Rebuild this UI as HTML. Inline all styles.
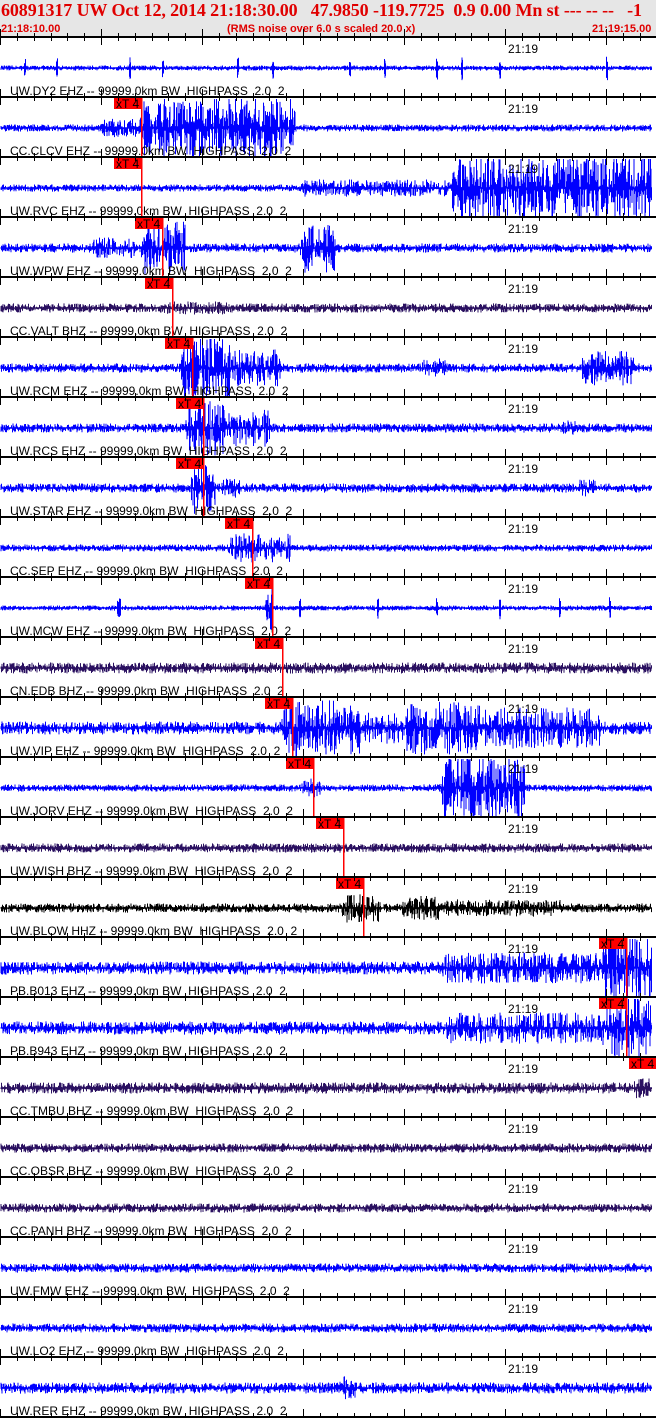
<!DOCTYPE html>
<html><head><meta charset="utf-8">
<style>
html,body{margin:0;padding:0;background:#fff;}
body{width:656px;height:1418px;overflow:hidden;position:relative;}
#hdr{position:absolute;left:0;top:0;width:656px;height:37px;background:#e6e6e6;}
#t1{position:absolute;left:1px;top:0px;font:bold 18px "Liberation Serif",serif;color:#e00000;white-space:nowrap;letter-spacing:-0.1px;}
.t2{position:absolute;top:23px;font:bold 11px "Liberation Sans",sans-serif;color:#e00000;white-space:nowrap;}
svg{position:absolute;left:0;top:0;}
</style></head><body>
<div id="hdr"></div>
<div id="t1">60891317 UW Oct 12, 2014 21:18:30.00&nbsp;&nbsp; 47.9850 -119.7725&nbsp; 0.9 0.00 Mn st --- -- --&nbsp;&nbsp; -1</div>
<div class="t2" style="left:1px">21:18:10.00</div>
<div class="t2" style="left:227px">(RMS noise over 6.0 s scaled 20.0 x)</div>
<div class="t2" style="left:592px">21:19:15.00</div>
<svg id="s" width="656" height="1418" xmlns="http://www.w3.org/2000/svg"></svg>
<script>
(function(){
var B="#0000ff",P="#2a1060",K="#000000";
var T=[
["UW.DY2 EHZ -- 99999.0km BW  HIGHPASS  2.0  2",B,2,[],[25,57,130,163,238,273,350,385,437,462,500,607],null],
["CC.CLCV EHZ -- 99999.0km BW  HIGHPASS  2.0  2",B,3,[[100,200,9],[140,170,30],[170,295,30]],[],114],
["UW.RVC EHZ -- 99999.0km BW  HIGHPASS  2.0  2",B,3,[[300,450,8],[450,655,32]],[],114],
["UW.WPW EHZ -- 99999.0km BW  HIGHPASS  2.0  2",B,4,[[90,135,10],[140,185,26],[300,335,24]],[],135],
["CC.VALT BHZ -- 99999.0km BW  HIGHPASS  2.0  2",P,4,[[160,230,6]],[],145],
["UW.RCM EHZ -- 99999.0km BW  HIGHPASS  2.0  2",B,4,[[180,230,32],[230,280,18],[420,445,9],[580,635,17]],[],165],
["UW.RCS EHZ -- 99999.0km BW  HIGHPASS  2.0  2",B,4,[[185,225,28],[225,270,18],[560,575,7]],[],176],
["UW.STAR EHZ -- 99999.0km BW  HIGHPASS  2.0  2",B,4,[[190,215,28],[215,240,9],[575,595,8]],[],176],
["CC.SEP EHZ -- 99999.0km BW  HIGHPASS  2.0  2",B,3,[[228,290,14]],[],225],
["UW.MCW EHZ -- 99999.0km BW  HIGHPASS  2.0  2",B,2,[[265,272,22]],[120,118,300,378,437,500,560,610],245],
["CN.EDB BHZ -- 99999.0km BW  HIGHPASS  2.0  2",P,5,[],[],255],
["UW.VIP EHZ -- 99999.0km BW  HIGHPASS  2.0  2",B,6,[[280,360,28],[360,400,15],[400,480,26],[480,600,20]],[],265],
["UW.JORV EHZ -- 99999.0km BW  HIGHPASS  2.0  2",B,3,[[300,320,9],[440,525,32]],[],286],
["UW.WISH BHZ -- 99999.0km BW  HIGHPASS  2.0  2",P,4,[],[],316],
["UW.BLOW HHZ -- 99999.0km BW  HIGHPASS  2.0  2",K,4,[[340,380,14],[400,440,12],[440,560,8]],[],336],
["PB.B013 EHZ -- 99999.0km BW  HIGHPASS  2.0  2",B,6,[[440,600,15],[600,656,32]],[],599],
["PB.B943 EHZ -- 99999.0km BW  HIGHPASS  2.0  2",B,6,[[440,600,15],[600,656,32]],[],599],
["CC.TMBU BHZ -- 99999.0km BW  HIGHPASS  2.0  2",P,5,[[630,650,10]],[],629],
["CC.OBSR BHZ -- 99999.0km BW  HIGHPASS  2.0  2",P,4,[],[],null],
["CC.PANH BHZ -- 99999.0km BW  HIGHPASS  2.0  2",P,4,[],[],null],
["UW.FMW EHZ -- 99999.0km BW  HIGHPASS  2.0  2",B,4,[],[],null],
["UW.LO2 EHZ -- 99999.0km BW  HIGHPASS  2.0  2",B,4,[],[],null],
["UW.RER EHZ -- 99999.0km BW  HIGHPASS  2.0  2",B,5,[[338,356,11]],[],null]
];
var seed=12345;function R(){seed=(seed*16807)%2147483647;return seed/2147483647;}
var o="";
for(var i=0;i<T.length;i++){
 var t=T[i],tp=38+60*i,mid=tp+30,d="";
 for(var x=1;x<652;x+=0.5){
  var a=t[2];
  for(var j=0;j<t[3].length;j++){var b=t[3][j];if(x>=b[0]&&x<=b[1]){var f=Math.min(1,(x-b[0])/6+0.2);a=Math.max(a,b[2]*f);}}
  var sp=0;for(var j=0;j<t[4].length;j++){if(Math.abs(x-t[4][j])<1)sp=7;}
  var u1=Math.pow(R(),2.5),u2=Math.pow(R(),2.5);
  var y1=mid-a*u1-(sp?sp*R()+3:0)-0.6,y2=mid+a*u2+(sp?sp*R()+3:0)+0.6;
  y1=Math.max(tp+1,y1);y2=Math.min(tp+59,y2);
  d+="M"+x.toFixed(1)+" "+y1.toFixed(1)+"V"+y2.toFixed(1);
 }
 o+='<path d="'+d+'" stroke="'+t[1]+'" stroke-width="1" fill="none"/>';
 o+='<text x="10" y="'+(tp+57)+'" font-family="Liberation Sans,sans-serif" font-size="12" fill="#000" xml:space="preserve">'+t[0]+'</text>';
 o+='<text x="508" y="'+(tp+15)+'" font-family="Liberation Sans,sans-serif" font-size="12" fill="#000">21:19</text>';
 if(t[5]!==null){var bx=t[5];
  o+='<rect x="'+bx+'" y="'+tp+'" width="27" height="11" fill="#ff0000"/>';
  o+='<text x="'+(bx+2)+'" y="'+(tp+10)+'" font-family="Liberation Sans,sans-serif" font-size="12" fill="#000">xT 4</text>';
  o+='<rect x="'+(bx+27)+'" y="'+tp+'" width="1.5" height="58" fill="#ff0000"/>';
 }
}
for(var i=0;i<=23;i++){
 var y=38+60*i-1;
 o+='<rect x="0" y="'+(y-1)+'" width="656" height="2" fill="#000"/>';
 for(var k=0;k<40;k++){var x=Math.round(k*101/6)+0.5;if(x>656)break;
  var L=(k%6==0)?8:4;
  o+='<rect x="'+(x-0.5)+'" y="'+(y-L)+'" width="1" height="'+(2*L)+'" fill="#000"/>';}
}
document.getElementById("s").innerHTML=o;
})();
</script>
</body></html>
